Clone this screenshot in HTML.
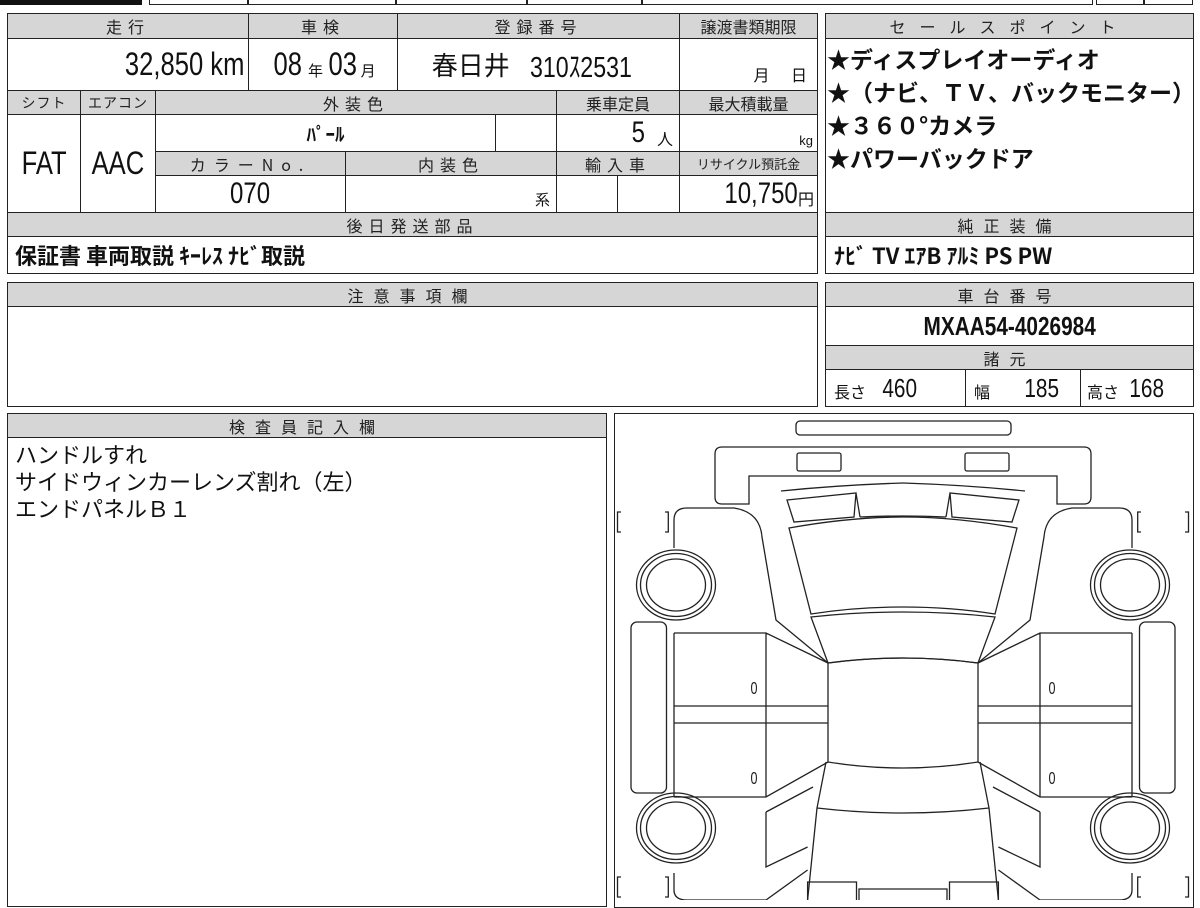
<!DOCTYPE html>
<html><head><meta charset="utf-8"><style>
*{margin:0;padding:0;box-sizing:border-box}
body{width:1200px;height:900px;background:#fff;position:relative;overflow:hidden;font-family:"Liberation Sans","Noto Sans CJK JP",sans-serif;color:#111}
.c{position:absolute;border:1.5px solid #222;display:flex;align-items:center;justify-content:center;white-space:nowrap;overflow:hidden}
.h{background:#d6d6d6;font-size:16px;letter-spacing:6px;color:#222;font-family:"Noto Sans CJK JP",sans-serif}
.v{font-size:32px}
.n{display:inline-block;transform:scaleX(.8);}
.j{font-family:"Noto Sans CJK JP",sans-serif}
</style></head><body>
<div style="position:absolute;left:0;top:0;width:142px;height:5px;background:#111"></div>
<div class="c" style="left:149px;top:-2px;width:944px;height:7px"></div>
<div style="position:absolute;left:247px;top:0;width:1.5px;height:5px;background:#222"></div>
<div style="position:absolute;left:395px;top:0;width:1.5px;height:5px;background:#222"></div>
<div style="position:absolute;left:526px;top:0;width:1.5px;height:5px;background:#222"></div>
<div style="position:absolute;left:641px;top:0;width:1.5px;height:5px;background:#222"></div>
<div class="c" style="left:1096px;top:-2px;width:97px;height:7px"></div>
<div style="position:absolute;left:1143px;top:0;width:1.5px;height:5px;background:#222"></div>

<div class="c h" style="left:7px;top:13px;width:242px;height:26px">走行</div>
<div class="c h" style="left:248px;top:13px;width:150px;height:26px">車検</div>
<div class="c h" style="left:397px;top:13px;width:283px;height:26px">登録番号</div>
<div class="c h" style="left:679px;top:13px;width:139px;height:26px;letter-spacing:0">譲渡書類期限</div>
<div class="c v" style="left:7px;top:38px;width:242px;height:53px;justify-content:flex-end;padding-right:4px"><span class="n" style="transform-origin:right">32,850 km</span></div>
<div class="c v" style="left:248px;top:38px;width:150px;height:53px"><span class="n">08</span><span class="j" style="font-size:15px;margin:12px 2px 0">年</span><span class="n">03</span><span class="j" style="font-size:15px;margin-top:12px">月</span></div>
<div class="c" style="left:397px;top:38px;width:283px;height:53px;font-size:26px"><span class="j">春日井 </span><span class="n" style="font-size:29px">&nbsp;310ｽ2531</span></div>
<div class="c j" style="left:679px;top:38px;width:139px;height:53px;font-size:16px;align-items:flex-end;padding-bottom:4px;justify-content:flex-end;padding-right:10px">月&nbsp;&nbsp;&nbsp;&nbsp;&nbsp;&nbsp;日</div>

<div class="c h" style="left:7px;top:90px;width:74px;height:25px;letter-spacing:1px;font-size:14px">シフト</div>
<div class="c h" style="left:80px;top:90px;width:76px;height:25px;letter-spacing:1px;font-size:14px">エアコン</div>
<div class="c h" style="left:155px;top:90px;width:402px;height:25px">外装色</div>
<div class="c h" style="left:556px;top:90px;width:124px;height:25px;letter-spacing:0">乗車定員</div>
<div class="c h" style="left:679px;top:90px;width:139px;height:25px;letter-spacing:0">最大積載量</div>
<div class="c v" style="left:7px;top:114px;width:74px;height:99px"><span class="n">FAT</span></div>
<div class="c v" style="left:80px;top:114px;width:76px;height:99px"><span class="n">AAC</span></div>
<div class="c j" style="left:155px;top:114px;width:341px;height:38px;font-size:19px;font-weight:bold">ﾊﾟｰﾙ</div>
<div class="c" style="left:495px;top:114px;width:62px;height:38px"></div>
<div class="c" style="left:556px;top:114px;width:124px;height:38px;font-size:30px;justify-content:flex-end;padding-right:6px"><span class="n">5</span><span class="j" style="font-size:16px;margin:10px 0 0 10px">人</span></div>
<div class="c" style="left:679px;top:114px;width:139px;height:38px;justify-content:flex-end;align-items:flex-end;padding:0 4px 3px 0;font-size:13px">kg</div>
<div class="c h" style="left:155px;top:151px;width:191px;height:25px;letter-spacing:8px">カラーNo.</div>
<div class="c h" style="left:345px;top:151px;width:212px;height:25px">内装色</div>
<div class="c h" style="left:556px;top:151px;width:124px;height:25px">輸入車</div>
<div class="c h" style="left:679px;top:151px;width:139px;height:25px;letter-spacing:0;font-size:13px">リサイクル預託金</div>
<div class="c v" style="left:155px;top:175px;width:191px;height:38px;font-size:30px"><span class="n">070</span></div>
<div class="c j" style="left:345px;top:175px;width:212px;height:38px;justify-content:flex-end;align-items:flex-end;padding:0 6px 2px 0;font-size:15px">系</div>
<div class="c" style="left:556px;top:175px;width:62px;height:38px"></div>
<div class="c" style="left:617px;top:175px;width:63px;height:38px"></div>
<div class="c" style="left:679px;top:175px;width:139px;height:38px;font-size:30px;justify-content:flex-end;padding-right:3px"><span class="n" style="transform-origin:right">10,750</span><span class="j" style="font-size:16px;margin-top:8px">円</span></div>
<div class="c h" style="left:7px;top:212px;width:811px;height:25px">後日発送部品</div>
<div class="c j" style="left:7px;top:236px;width:811px;height:38px;justify-content:flex-start;padding-left:7px;font-size:22px;font-weight:bold">保証書 車両取説 ｷｰﾚｽ ﾅﾋﾞ取説</div>

<div class="c h" style="left:825px;top:13px;width:369px;height:26px;letter-spacing:14px">セールスポイント</div>
<div class="c j" style="left:825px;top:38px;width:369px;height:175px;display:block;padding:3px 0 0 1px;font-size:23px;font-weight:bold;line-height:33px">★ディスプレイオーディオ<br>★（ナビ、ＴＶ、バックモニター）<br>★３６０°カメラ<br>★パワーバックドア</div>
<div class="c h" style="left:825px;top:212px;width:369px;height:25px;letter-spacing:10px">純正装備</div>
<div class="c j" style="left:825px;top:236px;width:369px;height:38px;justify-content:flex-start;padding-left:8px;font-size:22px;font-weight:bold">ﾅﾋﾞ TV ｴｱB ｱﾙﾐ PS PW</div>

<div class="c h" style="left:7px;top:282px;width:811px;height:25px;letter-spacing:10px">注意事項欄</div>
<div class="c" style="left:7px;top:306px;width:811px;height:101px"></div>
<div class="c h" style="left:825px;top:282px;width:369px;height:25px;letter-spacing:10px">車台番号</div>
<div class="c" style="left:825px;top:306px;width:369px;height:40px;font-size:26px;font-weight:bold"><span class="n">MXAA54-4026984</span></div>
<div class="c h" style="left:825px;top:345px;width:369px;height:25px;letter-spacing:10px">諸元</div>
<div class="c" style="left:825px;top:369px;width:141px;height:38px;justify-content:flex-start;padding-left:8px"><span class="j" style="font-size:16px;margin-top:6px">長さ</span><span class="n" style="font-size:26px;margin-left:12px">460</span></div>
<div class="c" style="left:965px;top:369px;width:116px;height:38px;justify-content:flex-start;padding-left:8px"><span class="j" style="font-size:16px;margin-top:6px">幅</span><span class="n" style="font-size:26px;margin-left:30px">185</span></div>
<div class="c" style="left:1080px;top:369px;width:114px;height:38px;justify-content:flex-start;padding-left:6px"><span class="j" style="font-size:16px;margin-top:6px">高さ</span><span class="n" style="font-size:26px;margin-left:6px">168</span></div>

<div class="c h" style="left:7px;top:413px;width:600px;height:25px;letter-spacing:10px">検査員記入欄</div>
<div class="c j" style="left:7px;top:437px;width:600px;height:470px;display:block;padding:3px 0 0 7px;font-size:22px;line-height:27px">ハンドルすれ<br>サイドウィンカーレンズ割れ（左）<br>エンドパネルＢ１</div>

<div class="c" style="left:614px;top:413px;width:580px;height:495px"></div>
<svg style="position:absolute;left:0;top:0" width="1200" height="900" fill="none" stroke="#222" stroke-width="1.3">
<rect x="796" y="421" width="215" height="14" rx="4"/>
<g id="half">
<path d="M903 447 H722 Q715 447 715 454 V497 Q715 504 722 504 H749 V476 H903"/>
<rect x="797" y="453" width="44" height="18" rx="2"/>
<path d="M781 491 Q840 485 903 483 M787 500 L856 493 L854 517 L794 522 Z M860 517 Q880 516 903 516 M860 517 L856 493"/>
<path d="M903 517 Q850 517 789 528 L811 614 Q855 607 903 607"/>
<path d="M903 612 Q855 612 811 617 L828 663 Q865 658 903 658"/>
<path d="M674 548 V520 Q674 508 687 508 H734 Q760 512 762 537 L776 620 L828 663"/>
<ellipse cx="676" cy="585" rx="39.5" ry="35"/><ellipse cx="676" cy="585" rx="35.5" ry="31.5"/><ellipse cx="676" cy="585" rx="29.5" ry="26"/>
<ellipse cx="676" cy="828" rx="39.5" ry="35"/><ellipse cx="676" cy="828" rx="35.5" ry="31.5"/><ellipse cx="676" cy="828" rx="29.5" ry="26"/>
<rect x="631" y="622" width="35.5" height="171" rx="6"/>
<path d="M674 633 H766 L828 663 M674 633 V797 M674 706 H828 M674 723 H828 M766 633 V797 M674 797 H766 L828 762"/>
<path d="M828 663 V762 Q865 768 903 768 M828 663 Q865 658 903 658"/>
<path d="M826 762 L817 808 Q860 813 903 813 M817 808 L807.6 900"/>
<path d="M766 812 L813 787 M766 812 V867 L807.6 847"/>
<path d="M674 873 V890 Q674 900 687 900 H766 L807.6 870"/>
<path d="M807.6 900 V882 H856.5 V900 M859 900 V889 H903"/>
<path d="M621 512 H617.5 V532 H621 M665 512 H668.3 V532 H665 M621 877 H617.5 V897 H621 M665 877 H668.3 V897 H665"/>
</g>
<use href="#half" transform="translate(1806,0) scale(-1,1)"/>
<g fill="#222" stroke="none" font-size="18" font-family="Liberation Sans" text-anchor="middle">
<text x="754" y="694" transform="translate(754,694) scale(0.7,1) translate(-754,-694)">0</text>
<text x="754" y="784" transform="translate(754,784) scale(0.7,1) translate(-754,-784)">0</text>
<text x="1052" y="694" transform="translate(1052,694) scale(0.7,1) translate(-1052,-694)">0</text>
<text x="1052" y="784" transform="translate(1052,784) scale(0.7,1) translate(-1052,-784)">0</text>
</g>
</svg>
</body></html>
